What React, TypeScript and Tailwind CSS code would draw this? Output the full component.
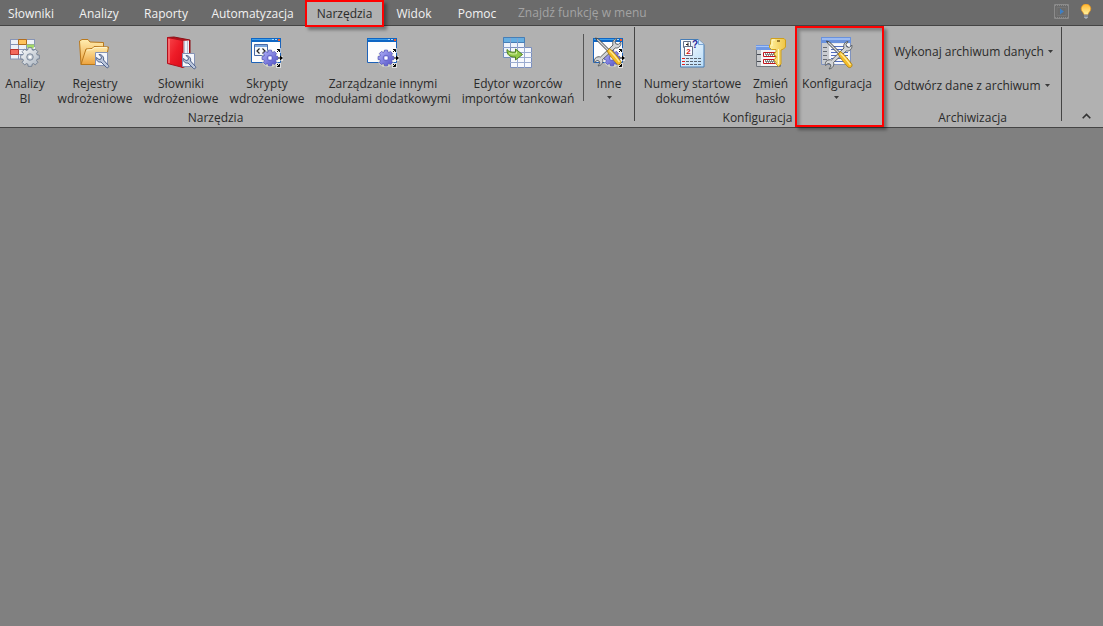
import React from 'react';

interface ToolProps {
  icon: React.ReactNode;
  lines: string[];
  className: string;
  dropdown?: boolean;
}

const tabs = [
  { label: 'Słowniki', size: 'w-[62px] mr-1' },
  { label: 'Analizy', size: 'w-[66px]' },
  { label: 'Raporty', size: 'w-[68px]' },
  { label: 'Automatyzacja', size: 'w-[105px]' },
  { label: 'Narzędzia', size: 'w-[79px]', active: true },
  { label: 'Widok', size: 'w-[60px]' },
  { label: 'Pomoc', size: 'w-[66px]' },
];

function gearPath(cx: number, cy: number, r: number) {
  const points: string[] = [];
  for (let i = 0; i < 8; i++) {
    const base = (i * Math.PI) / 4;
    [[-0.3, 0.78], [-0.19, 1], [0.19, 1], [0.3, 0.78]].forEach(([a, k]) => {
      points.push(`${(cx + Math.cos(base + a) * r * k).toFixed(2)},${(cy + Math.sin(base + a) * r * k).toFixed(2)}`);
    });
  }
  return `M${points.join('L')}Z`;
}

function Icon({ children }: { children: React.ReactNode }) {
  return (
    <svg width="32" height="32" viewBox="0 0 32 32" fill="none" className="shrink-0 overflow-visible" aria-hidden="true">
      {children}
    </svg>
  );
}

function Gear({ cx, cy, r, fill, stroke, hole }: { cx: number; cy: number; r: number; fill: string; stroke: string; hole: string }) {
  return (
    <g>
      <path d={gearPath(cx, cy, r)} fill={fill} stroke={stroke} strokeWidth="0.8" strokeLinejoin="round" />
      <circle cx={cx} cy={cy} r={r * 0.34} fill={hole} stroke={stroke} strokeWidth="0.8" />
      <circle cx={cx} cy={cy} r={r * 0.16} fill="#fff" />
    </g>
  );
}

function BlueGear() {
  return (
    <g>
      <circle cx="19" cy="21.5" r="8.8" fill="#eef3d8" opacity="0.55" />
      <Gear cx={19} cy={21} r={8} fill="url(#gearBlue)" stroke="#5353bd" hole="#c3c3f6" />
      <path d="M25 11h5v5h-5zM27 19h5v5h-5zM25 26h5v5h-5z" fill="#fff" opacity="0.6" />
      <path d="M26 15l2.500-2.500M26 12.500h2.500V15M26 27l2.500 2.500M26 29.500h2.500V27M27 21h3" stroke="#000" />
      <path d="M29 18.500l3 2.500-3 2.500z" fill="#000" />
    </g>
  );
}

function AppWindow() {
  return (
    <g>
      <path d="M0.500 1.500h29v24h-29z" fill="#fdfdfe" stroke="#1d62b8" />
      <path d="M0 1h30v4H0z" fill="#0f66c4" />
      <path d="M1 2h20v1H1z" fill="#3fa0ea" />
      <path d="M21 2h2v1h-2zM24 2h2v1h-2z" fill="#a4d8ff" />
      <path d="M27 2h2v2h-2z" fill="#f05a28" />
    </g>
  );
}

function WrenchTile({ x, y }: { x: number; y: number }) {
  return (
    <g transform={`translate(${x} ${y})`}>
      <path d="M0.500 0.500h12v13h-12z" fill="#f5f7fc" stroke="#8492b5" />
      <path
        d="M4 2.500l2.500 2.500-0.500 2-2 .5-2.500-2c-.5 3 1.500 5 4.500 4.500l5.500 5.500c1.200 1 3-.8 2-2L8.500 8c.8-3-1.500-5.500-4.500-5.500z"
        fill="#bac6dc"
        stroke="#4d5f88"
        strokeLinejoin="round"
      />
    </g>
  );
}

function CrossedTools() {
  return (
    <g strokeLinejoin="round">
      <path
        d="M2 22.500c2-2 4-2 5.500-1.500L20 9c-1-3 .5-6 4-6.500l-2 3 .8 2.300 2.500.7 2.500-2.500c.8 3.500-2 6.500-5.500 6L9.500 23.500c1 3-1 6-4.500 6.500l2-3-1-2-2-.5-2.500 2c-.3-1.500-.2-3 .5-4z"
        fill="#d2d4d6"
        stroke="#5c6063"
      />
      <path d="M2.500 2l3 1L17 14.500l-1.500 1.500L4 4.500z" fill="#d8dadd" stroke="#3f4346" />
      <path d="M14 15l2.500-2.500c4 3 8.500 8.500 11.500 13 .5 2.500-2 4-4 2.500-4-4.500-7.500-8.500-10-13z" fill="#f5bd27" stroke="#a47813" strokeWidth="0.800" />
      <path d="M16.500 14.500c4 3.500 7 7.500 10 11.500" stroke="#ffec9c" strokeWidth="1.300" />
    </g>
  );
}

function AnalysisIcon() {
  return (
    <Icon>
      <path d="M1 2h25v20H1z" fill="#eef1f7" />
      <path d="M1 2.500h25M1 7.500h25M1 12.500h25M1 17.500h16M1 22h14M1.500 2v20M9.500 2v20M17.500 2v12M25.500 2v8" stroke="#8794b5" />
      <path d="M9.500 2.500h8v5h-8z" fill="#ffc35c" stroke="#b06c1e" />
      <path d="M1.500 12.500h8v5h-8z" fill="#f3685c" stroke="#b8342d" />
      <path d="M17.500 7.500h8l-1 4h-6z" fill="#a5da69" />
      <Gear cx={21} cy={20} r={9.5} fill="url(#gearGrey)" stroke="#66758a" hole="#c9d0d8" />
    </Icon>
  );
}

function FolderIcon() {
  return (
    <Icon>
      <path d="M.5 4l2.500-1.500h6L11 5l13.500.5V11L26 27 2 27.500z" fill="url(#folder)" stroke="#b9781c" />
      <path d="M7 12l6-.5 2-2 14.500.5L26 27.500H2z" fill="url(#folder)" stroke="#b9781c" strokeLinejoin="round" />
      <path d="M8 13l5.500-.5 2-2h12.500" stroke="#fff3c9" />
      <WrenchTile x={16} y={15} />
    </Icon>
  );
}

function BookIcon() {
  return (
    <Icon>
      <path d="M2.500.5L9 0l16 3v25l-8 2.500z" fill="#b4121b" stroke="#8c0f16" />
      <path d="M17 4l7-.5V28L17 30z" fill="#eef1f7" />
      <path d="M19.500 4v24M22.500 4v24" stroke="#b9bfd2" />
      <path d="M2.500.5L18 3.500v27l-15.500-4z" fill="url(#book)" stroke="#b00f1c" strokeLinejoin="round" />
      <path d="M4 2v24" stroke="#ff9c9c" />
      <WrenchTile x={17} y={16} />
    </Icon>
  );
}

function ScriptIcon() {
  return (
    <Icon>
      <AppWindow />
      <path d="M3.500 7.500h13v11h-13z" fill="#f7f9fc" stroke="#4868a4" />
      <path d="M4 8h12v2H4z" fill="#7ba7e0" />
      <path d="M8.500 11.500L6 14l2.500 2.500M11.500 11.500L14 14l-2.500 2.500" stroke="#222" strokeWidth="1.200" />
      <BlueGear />
    </Icon>
  );
}

function ModulesIcon() {
  return (
    <Icon>
      <AppWindow />
      <BlueGear />
    </Icon>
  );
}

function ImportIcon() {
  return (
    <Icon>
      <path d="M1.500.5h21v20h-21z" fill="#eff3fb" stroke="#6f8cbc" />
      <path d="M1.500.5h21v5h-21z" fill="#67aee0" stroke="#477eb6" />
      <path d="M1 10.500h22M1 15.500h22M8.500 1v20M15.500 1v20" stroke="#8ba0cb" />
      <path d="M8.500 10.500h21v20h-21z" fill="#f6f8fd" stroke="#7b8fbe" />
      <path d="M8 15.500h22M8 20.500h22M8 25.500h22M15.500 10v21M22.500 10v21" stroke="#9aabd0" />
      <path d="M5 12.500c2 2.500 5 3 8.500 2.500v-3l7 5.500-7 5.500v-3c-5 .5-9-2-8.500-7.500z" fill="#91c849" stroke="#4d7e22" strokeLinejoin="round" />
      <path d="M7 16c2 1.300 5 1 7.500.8V14.500" stroke="#d7f1a5" />
    </Icon>
  );
}

function OtherIcon() {
  return (
    <Icon>
      <AppWindow />
      <BlueGear />
      <g transform="translate(0 -1)">
        <CrossedTools />
      </g>
    </Icon>
  );
}

function NumbersIcon() {
  return (
    <Icon>
      <path d="M3.500 2.500h18l5.500 5v22.500H3.500z" fill="url(#page)" stroke="#467cb5" />
      <path d="M21.500 2.500v5H27" fill="#d7e9fb" stroke="#7aa5d3" />
      <path d="M6.500 4.500h7v6h-7z" fill="#fff" stroke="#65728a" />
      <path d="M11 5.500v4M9 7.500h2" stroke="#222" />
      <path d="M7.500 9.500h8v9h-8z" fill="#fff" stroke="#65728a" />
      <text x="11.500" y="17" textAnchor="middle" fontSize="8" fontWeight="700" fill="#d01414" fontFamily="Liberation Sans, sans-serif">2</text>
      <text x="18" y="11" textAnchor="middle" fontSize="10" fontWeight="700" fill="#28289a" fontFamily="Liberation Sans, sans-serif">?</text>
      <path d="M5 21.500h3M5 24.500h3M5 27.500h3" stroke="#e02020" />
      <path d="M9 21.500h15M9 24.500h15M9 27.500h15" stroke="#5a6370" strokeDasharray="3 1" />
    </Icon>
  );
}

function KeyIcon() {
  return (
    <Icon>
      <path d="M1.500 8.500h24v21h-24z" fill="#f5f5f5" stroke="#70757c" />
      <path d="M1 8h24v5H1z" fill="#6f98e4" />
      <path d="M1 9h24v1H1z" fill="#a8c5f7" />
      <path d="M2 13h4v16H2z" fill="#c9cbce" />
      <path d="M2 17.500h4M2 24.500h4" stroke="#44484f" />
      <path d="M8.500 15.500h13v4h-13zM8.500 22.500h13v4h-13z" fill="#fff" stroke="#c3141d" />
      <path d="M10 17h10M10 24h10" stroke="#111" strokeDasharray="1 1" />
      <path d="M11 18h10M11 25h10" stroke="#111" strokeDasharray="1 1" />
      <path
        d="M16 1.500h13l1.500 1.500v7l-2 2-2.500 1v14l-2.500 2.500-2.500-2.500v-2l-1.500-1v-2l1.500-1v-2l-1.500-1v-2l1.500-1v-2.500h-4.500l-2-2V8l1-1z"
        fill="url(#key)"
        stroke="#cf9f1c"
        strokeLinejoin="round"
      />
      <path d="M23.500 12v15M17 3h3M17 3v6" stroke="#fff8c4" />
      <path d="M22 3h3v2h-3z" fill="#9a7b2b" />
    </Icon>
  );
}

function ConfigIcon() {
  return (
    <Icon>
      <path d="M.5.500h29v27H.5z" fill="#e9ebee" stroke="#7f92bd" />
      <path d="M0 0h30v6H0z" fill="#6a92dd" />
      <path d="M1 1h28v2H1z" fill="#9cbbf2" />
      <path d="M1 6h7v21H1z" fill="#c9ccd1" />
      <path d="M2 10.500h4M2 14.500h4M2 18.500h4M2 22.500h4" stroke="#676b73" />
      <path d="M8.500 7h20v20h-20z" fill="#f7f9fe" />
      <path d="M10 9.500h17M10 12.500h17M10 15.500h17M10 18.500h17M10 21.500h17M10 24.500h17" stroke="#526fc0" />
      <g transform="translate(3 2)">
        <CrossedTools />
      </g>
    </Icon>
  );
}

function Arrow() {
  return (
    <svg width="5" height="3" viewBox="0 0 5 3" className="shrink-0" aria-hidden="true">
      <path d="M0 0h5L2.500 3z" fill="#3a3a3a" />
    </svg>
  );
}

function Tool({ icon, lines, className, dropdown }: ToolProps) {
  return (
    <button type="button" className={`flex shrink-0 flex-col items-center gap-[7px] whitespace-nowrap pt-[11px] ${className}`}>
      {icon}
      <span className="flex flex-col items-center">
        {lines.map((line) => (
          <span key={line}>{line}</span>
        ))}
        {dropdown && (
          <span className="flex h-3 items-center">
            <Arrow />
          </span>
        )}
      </span>
    </button>
  );
}

function SharedGradients() {
  return (
    <svg width="0" height="0" className="absolute" aria-hidden="true">
      <defs>
        <linearGradient id="gearGrey" x1="0" y1="0" x2="1" y2="1">
          <stop stopColor="#fbfcfd" />
          <stop offset="1" stopColor="#a9b3be" />
        </linearGradient>
        <linearGradient id="gearBlue" x1="0" y1="0" x2="1" y2="1">
          <stop stopColor="#b4b4fa" />
          <stop offset="1" stopColor="#4c4cc4" />
        </linearGradient>
        <linearGradient id="folder" x1="0" y1="0" x2="0" y2="1">
          <stop stopColor="#ffedb0" />
          <stop offset="1" stopColor="#eda23c" />
        </linearGradient>
        <linearGradient id="book" x1="0" y1="0" x2="1" y2="1">
          <stop stopColor="#f8474b" />
          <stop offset="0.5" stopColor="#ee1c28" />
          <stop offset="1" stopColor="#d80a18" />
        </linearGradient>
        <linearGradient id="page" x1="0" y1="0" x2="1" y2="1">
          <stop stopColor="#ffffff" />
          <stop offset="1" stopColor="#b8dcf8" />
        </linearGradient>
        <linearGradient id="key" x1="0" y1="0" x2="1" y2="0">
          <stop stopColor="#fff0a0" />
          <stop offset="1" stopColor="#efc544" />
        </linearGradient>
        <linearGradient id="bulb" x1="0" y1="0" x2="0" y2="1">
          <stop stopColor="#ffb52e" />
          <stop offset="1" stopColor="#fff3a0" />
        </linearGradient>
      </defs>
    </svg>
  );
}

function MenuBar() {
  return (
    <nav className="flex h-[26px] items-stretch border-b border-[#444444] bg-[#6b6b6b] text-[#f2f2f2]">
      {tabs.map((tab) => (
        <button
          key={tab.label}
          type="button"
          className={`shrink-0 whitespace-nowrap ${tab.size} ${
            tab.active
              ? 'relative z-10 -mb-[2px] border-2 border-[#ff0000] bg-[#b1b1b1] text-[#2a2a2a] shadow-[3px_3px_3px_rgba(0,0,0,0.35)]'
              : 'pt-[2px]'
          }`}
        >
          {tab.label}
        </button>
      ))}
      <input
        type="text"
        aria-label="Znajdź funkcję w menu"
        placeholder="Znajdź funkcję w menu"
        className="ml-2 h-6 min-w-0 flex-1 bg-transparent outline-none placeholder:text-[#a3a3a3]"
      />
      <div className="flex shrink-0 items-start gap-[10px] pr-[10px] pt-1">
        <button type="button" aria-label="Film instruktażowy">
          <svg width="15" height="15" viewBox="0 0 15 15" fill="none">
            <path d="M.5.500h14v14H.5z" stroke="#8b8b8b" />
            <path d="M1 1.500h13M1 13.500h13" stroke="#8b8b8b" strokeDasharray="1 1" />
            <path d="M3 3.500h9v8H3z" stroke="#757575" />
            <path d="M6 4.500l4 3-4 3z" fill="#3e7fc4" />
          </svg>
        </button>
        <button type="button" aria-label="Wskazówka">
          <svg width="14" height="15" viewBox="0 0 14 15">
            <path d="M7 0a4.800 4.800 0 0 0-4.800 4.800C2.200 7.500 4.500 8 5 10.500h4C9.500 8 11.800 7.500 11.800 4.800A4.800 4.800 0 0 0 7 0z" fill="url(#bulb)" stroke="#e8941a" strokeWidth="0.700" />
            <path d="M5 10.500h4v3L7 15l-2-1.500z" fill="#a9b0bb" />
            <path d="M5 12h4" stroke="#5d6470" />
          </svg>
        </button>
      </div>
    </nav>
  );
}

export default function App() {
  return (
    <div className="flex min-h-screen flex-col overflow-hidden bg-[#808080] font-['Open_Sans','Noto_Sans',sans-serif] text-[12px] leading-[15px] text-[#2a2a2a]">
      <SharedGradients />
      <MenuBar />
      <header className="flex h-[102px] border-b border-[#444444] bg-[#b1b1b1]">
        <section aria-label="Narzędzia" className="flex shrink-0 flex-col">
          <div className="flex h-[84px]">
            <Tool icon={<AnalysisIcon />} lines={['Analizy', 'BI']} className="w-[50px]" />
            <Tool icon={<FolderIcon />} lines={['Rejestry', 'wdrożeniowe']} className="ml-[2px] w-[86px]" />
            <Tool icon={<BookIcon />} lines={['Słowniki', 'wdrożeniowe']} className="w-[86px]" />
            <Tool icon={<ScriptIcon />} lines={['Skrypty', 'wdrożeniowe']} className="w-[86px]" />
            <Tool icon={<ModulesIcon />} lines={['Zarządzanie innymi', 'modułami dodatkowymi']} className="w-[146px]" />
            <Tool icon={<ImportIcon />} lines={['Edytor wzorców', 'importów tankowań']} className="w-[124px]" />
            <div className="ml-[3px] mt-2 h-[67px] w-px bg-[#555555]" />
            <Tool icon={<OtherIcon />} lines={['Inne']} className="w-[50px]" dropdown />
          </div>
          <div className="w-[431px] text-center">Narzędzia</div>
        </section>
        <div className="mt-px h-[94px] w-px bg-[#444444]" />
        <section aria-label="Konfiguracja" className="flex shrink-0 flex-col">
          <div className="flex h-[84px]">
            <Tool icon={<NumbersIcon />} lines={['Numery startowe', 'dokumentów']} className="ml-1 w-[107px]" />
            <Tool icon={<KeyIcon />} lines={['Zmień', 'hasło']} className="w-[49px]" />
            <div className="relative w-[85px]">
              <Tool icon={<ConfigIcon />} lines={['Konfiguracja']} className="w-[84px]" dropdown />
              <span className="pointer-events-none absolute left-0 top-0 h-[101px] w-[89px] border-2 border-[#ff0000] shadow-[3px_3px_3px_rgba(0,0,0,0.35),inset_3px_3px_3px_rgba(0,0,0,0.25)]" />
            </div>
          </div>
          <div className="text-center">Konfiguracja</div>
        </section>
        <section aria-label="Archiwizacja" className="ml-1 flex shrink-0 flex-col">
          <div className="flex h-[84px] flex-col items-start gap-[19px] pl-[10px] pt-[18px]">
            <button type="button" className="flex items-center gap-1 whitespace-nowrap">
              Wykonaj archiwum danych
              <Arrow />
            </button>
            <button type="button" className="flex items-center gap-1 whitespace-nowrap">
              Odtwórz dane z archiwum
              <Arrow />
            </button>
          </div>
          <div className="w-[177px] text-center">Archiwizacja</div>
        </section>
        <div className="mt-px h-[94px] w-px shrink-0 bg-[#444444]" />
        <div className="flex flex-1 items-end justify-end pb-2 pr-3">
          <button type="button" aria-label="Zwiń wstążkę">
            <svg width="9" height="6" viewBox="0 0 9 6" fill="none">
              <path d="M.7 5.200L4.500 1.400l3.800 3.800" stroke="#333" strokeWidth="1.600" />
            </svg>
          </button>
        </div>
      </header>
      <main className="flex-1" />
    </div>
  );
}
